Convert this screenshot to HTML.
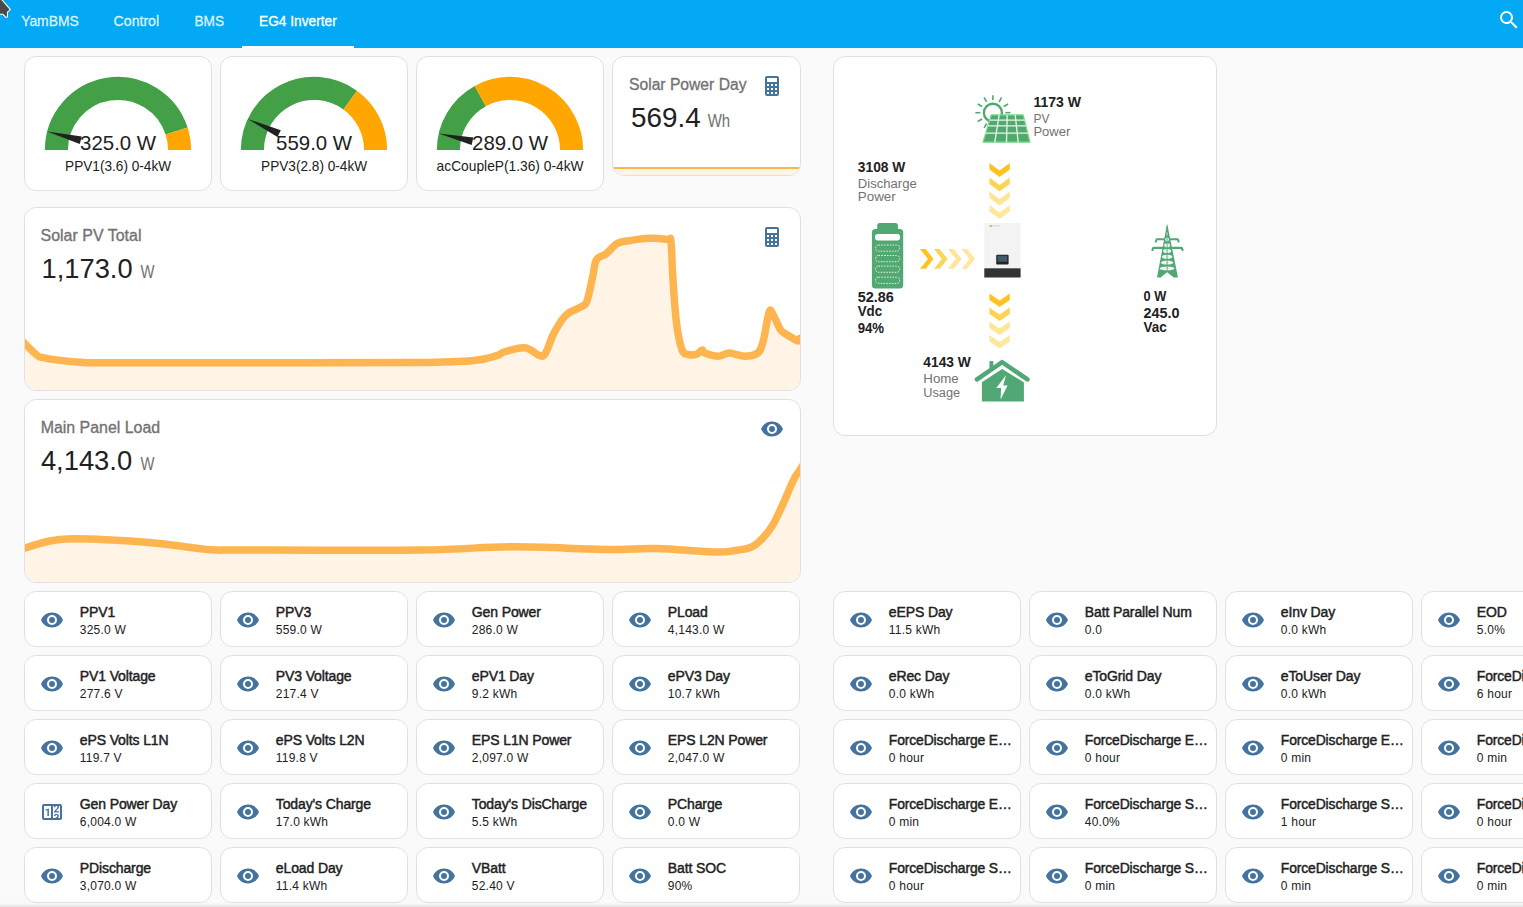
<!DOCTYPE html>
<html><head><meta charset="utf-8"><title>EG4 Inverter</title><style>
*{margin:0;padding:0;box-sizing:border-box}
html,body{width:1523px;height:907px;overflow:hidden;background:#fafafa;font-family:"Liberation Sans", sans-serif}
#hdr{position:absolute;left:0;top:0;width:1523px;height:48px;background:#03a9f4}
.card{position:absolute;background:#fff;border:1px solid #e0e0e0;border-radius:12px;overflow:hidden}
.ic{position:absolute}
#ov{position:absolute;left:0;top:0;width:1523px;height:907px;pointer-events:none}
#ov text{font-family:"Liberation Sans", sans-serif}
.tn{font-size:14px;fill:#212121;stroke:#212121;stroke-width:0.45px;letter-spacing:-0.12px}
.ts{font-size:12px;fill:#212121;letter-spacing:0.22px}
</style></head>
<body>
<div id="hdr"></div><div style="position:absolute;left:242px;top:46px;width:112px;height:2px;background:#fff"></div><svg class="ic" style="left:1497px;top:8px;width:24px;height:24px" viewBox="0 0 24 24"><path fill="#fff" d="M9.5,3A6.5,6.5 0 0,1 16,9.5C16,11.11 15.41,12.59 14.44,13.73L14.71,14H15.5L20.5,19L19,20.5L14,15.5V14.71L13.73,14.44C12.59,15.41 11.11,16 9.5,16A6.5,6.5 0 0,1 3,9.5A6.5,6.5 0 0,1 9.5,3M9.5,5C7,5 5,7 5,9.5C5,12 7,14 9.5,14C12,14 14,12 14,9.5C14,7 12,5 9.5,5Z"/></svg><div class="card" style="left:24px;top:56px;width:188px;height:135px;"><svg style="position:absolute;left:16.1px;top:15.8px;width:154px;height:77px;overflow:visible" viewBox="-50 -50 100 50"><path d="M -40.000 -0.000 A 40 40 0 0 1 38.042 -12.361" stroke="#43a047" stroke-width="15" fill="none"/><path d="M 38.042 -12.361 A 40 40 0 0 1 40.000 -0.000" stroke="#ffa600" stroke-width="15" fill="none"/><path d="M -25 -2.5 L -47.5 0 L -25 2.5 z" fill="#212121" transform="rotate(14.62)"/></svg></div><div class="card" style="left:220px;top:56px;width:188px;height:135px;"><svg style="position:absolute;left:16.1px;top:15.8px;width:154px;height:77px;overflow:visible" viewBox="-50 -50 100 50"><path d="M -40.000 -0.000 A 40 40 0 0 1 23.511 -32.361" stroke="#43a047" stroke-width="15" fill="none"/><path d="M 23.511 -32.361 A 40 40 0 0 1 40.000 -0.000" stroke="#ffa600" stroke-width="15" fill="none"/><path d="M -25 -2.5 L -47.5 0 L -25 2.5 z" fill="#212121" transform="rotate(25.16)"/></svg></div><div class="card" style="left:416px;top:56px;width:188px;height:135px;"><svg style="position:absolute;left:16.1px;top:15.8px;width:154px;height:77px;overflow:visible" viewBox="-50 -50 100 50"><path d="M -40.000 -0.000 A 40 40 0 0 1 -19.270 -35.052" stroke="#43a047" stroke-width="15" fill="none"/><path d="M -19.270 -35.052 A 40 40 0 0 1 40.000 -0.000" stroke="#ffa600" stroke-width="15" fill="none"/><path d="M -25 -2.5 L -47.5 0 L -25 2.5 z" fill="#212121" transform="rotate(13.00)"/></svg></div><div class="card" style="left:612px;top:56px;width:189px;height:120px;"><svg style="position:absolute;left:-1px;top:-1px;width:189px;height:120px" viewBox="0 0 189 120"><path d="M -4.0 112.0 C 31.5 112.0 157.5 112.0 193.0 112.0 L 193.0 125 L -4.0 125 Z" fill="#fff4e5"/><path d="M -4.0 112.0 C 31.5 112.0 157.5 112.0 193.0 112.0" fill="none" stroke="#ffb54f" stroke-width="2" stroke-linejoin="round" stroke-linecap="round"/></svg><svg class="ic" style="left:147px;top:17px;width:24px;height:24px" viewBox="0 0 24 24"><path fill="#44739e" d="M7,2H17A2,2 0 0,1 19,4V20A2,2 0 0,1 17,22H7A2,2 0 0,1 5,20V4A2,2 0 0,1 7,2M7,4V8H17V4H7M7,10V12H9V10H7M11,10V12H13V10H11M15,10V12H17V10H15M7,14V16H9V14H7M11,14V16H13V14H11M15,14V16H17V14H15M7,18V20H9V18H7M11,18V20H13V18H11M15,18V20H17V18H15Z"/></svg></div><div class="card" style="left:24px;top:207px;width:777px;height:184px;"><svg style="position:absolute;left:-1px;top:-1px;width:777px;height:184px" viewBox="0 0 777 184"><path d="M -4.0 131.0 C -3.1 132.0 -2.1 133.6 1.0 136.8 C 4.2 140.0 10.3 146.1 13.5 148.6 C 16.7 151.1 14.9 149.7 19.0 150.6 C 23.1 151.5 29.0 152.5 36.3 153.4 C 43.6 154.3 50.9 155.0 59.8 155.4 C 68.7 155.8 47.1 155.7 86.0 155.8 C 124.9 155.9 220.2 155.9 276.0 155.8 C 331.8 155.7 364.7 155.9 396.0 155.5 C 427.3 155.1 436.2 154.6 450.0 153.4 C 463.8 152.2 467.1 150.2 472.5 148.7 C 477.9 147.2 474.9 146.4 480.0 145.0 C 485.1 143.6 494.3 140.1 500.8 140.8 C 507.3 141.5 512.3 147.8 516.0 148.7 C 519.7 149.6 519.3 149.6 521.6 145.9 C 523.9 142.2 526.3 133.6 529.0 128.0 C 531.7 122.4 533.9 118.7 536.6 114.8 C 539.3 110.9 540.5 109.0 544.2 106.3 C 547.9 103.6 554.0 101.9 557.4 99.7 C 560.8 97.5 561.0 99.4 563.0 94.0 C 565.0 88.6 567.0 77.0 568.7 69.5 C 570.4 62.0 570.1 56.7 572.5 52.6 C 574.9 48.6 578.2 49.9 581.9 47.0 C 585.6 44.1 589.0 39.0 593.2 36.6 C 597.4 34.2 599.8 34.7 605.4 33.7 C 611.0 32.7 617.5 31.5 624.3 31.3 C 631.1 31.1 639.1 31.8 643.2 32.4 C 647.3 33.0 646.0 28.0 647.0 34.7 C 648.0 41.4 647.8 54.8 648.8 69.6 C 649.8 84.4 650.9 103.5 652.6 116.7 C 654.3 129.9 656.2 137.6 658.2 143.1 C 660.2 148.6 661.3 146.5 663.9 147.3 C 666.5 148.1 669.9 148.1 672.4 147.3 C 674.9 146.5 676.5 143.3 678.0 143.1 C 679.5 142.9 678.0 144.9 680.9 146.0 C 683.8 147.1 689.6 149.2 694.0 149.2 C 698.4 149.2 700.6 146.0 705.4 146.0 C 710.2 146.0 715.4 149.2 720.5 149.2 C 725.6 149.2 730.3 148.8 733.7 146.0 C 737.1 143.2 737.3 141.0 739.3 133.7 C 741.3 126.4 743.3 110.3 745.0 105.5 C 746.7 100.7 746.8 104.0 748.8 107.0 C 750.8 110.0 753.9 118.8 756.3 122.4 C 758.7 126.0 758.9 125.1 762.0 127.1 C 765.1 129.1 770.9 132.9 773.3 133.7 C 775.7 134.5 773.8 132.6 775.2 131.8 C 776.6 131.0 780.0 129.5 781.0 129.0 L 781.0 189 L -4.0 189 Z" fill="#fff4e5"/><path d="M -4.0 131.0 C -3.1 132.0 -2.1 133.6 1.0 136.8 C 4.2 140.0 10.3 146.1 13.5 148.6 C 16.7 151.1 14.9 149.7 19.0 150.6 C 23.1 151.5 29.0 152.5 36.3 153.4 C 43.6 154.3 50.9 155.0 59.8 155.4 C 68.7 155.8 47.1 155.7 86.0 155.8 C 124.9 155.9 220.2 155.9 276.0 155.8 C 331.8 155.7 364.7 155.9 396.0 155.5 C 427.3 155.1 436.2 154.6 450.0 153.4 C 463.8 152.2 467.1 150.2 472.5 148.7 C 477.9 147.2 474.9 146.4 480.0 145.0 C 485.1 143.6 494.3 140.1 500.8 140.8 C 507.3 141.5 512.3 147.8 516.0 148.7 C 519.7 149.6 519.3 149.6 521.6 145.9 C 523.9 142.2 526.3 133.6 529.0 128.0 C 531.7 122.4 533.9 118.7 536.6 114.8 C 539.3 110.9 540.5 109.0 544.2 106.3 C 547.9 103.6 554.0 101.9 557.4 99.7 C 560.8 97.5 561.0 99.4 563.0 94.0 C 565.0 88.6 567.0 77.0 568.7 69.5 C 570.4 62.0 570.1 56.7 572.5 52.6 C 574.9 48.6 578.2 49.9 581.9 47.0 C 585.6 44.1 589.0 39.0 593.2 36.6 C 597.4 34.2 599.8 34.7 605.4 33.7 C 611.0 32.7 617.5 31.5 624.3 31.3 C 631.1 31.1 639.1 31.8 643.2 32.4 C 647.3 33.0 646.0 28.0 647.0 34.7 C 648.0 41.4 647.8 54.8 648.8 69.6 C 649.8 84.4 650.9 103.5 652.6 116.7 C 654.3 129.9 656.2 137.6 658.2 143.1 C 660.2 148.6 661.3 146.5 663.9 147.3 C 666.5 148.1 669.9 148.1 672.4 147.3 C 674.9 146.5 676.5 143.3 678.0 143.1 C 679.5 142.9 678.0 144.9 680.9 146.0 C 683.8 147.1 689.6 149.2 694.0 149.2 C 698.4 149.2 700.6 146.0 705.4 146.0 C 710.2 146.0 715.4 149.2 720.5 149.2 C 725.6 149.2 730.3 148.8 733.7 146.0 C 737.1 143.2 737.3 141.0 739.3 133.7 C 741.3 126.4 743.3 110.3 745.0 105.5 C 746.7 100.7 746.8 104.0 748.8 107.0 C 750.8 110.0 753.9 118.8 756.3 122.4 C 758.7 126.0 758.9 125.1 762.0 127.1 C 765.1 129.1 770.9 132.9 773.3 133.7 C 775.7 134.5 773.8 132.6 775.2 131.8 C 776.6 131.0 780.0 129.5 781.0 129.0" fill="none" stroke="#ffb54f" stroke-width="7.5" stroke-linejoin="round" stroke-linecap="round"/></svg><svg class="ic" style="left:735px;top:17px;width:24px;height:24px" viewBox="0 0 24 24"><path fill="#44739e" d="M7,2H17A2,2 0 0,1 19,4V20A2,2 0 0,1 17,22H7A2,2 0 0,1 5,20V4A2,2 0 0,1 7,2M7,4V8H17V4H7M7,10V12H9V10H7M11,10V12H13V10H11M15,10V12H17V10H15M7,14V16H9V14H7M11,14V16H13V14H11M15,14V16H17V14H15M7,18V20H9V18H7M11,18V20H13V18H11M15,18V20H17V18H15Z"/></svg></div><div class="card" style="left:24px;top:399px;width:777px;height:184px;"><svg style="position:absolute;left:-1px;top:-1px;width:777px;height:184px" viewBox="0 0 777 184"><path d="M -6.0 151.0 C -4.8 150.6 -7.9 151.0 0.8 149.0 C 9.5 147.0 19.8 141.0 42.2 140.0 C 64.6 139.0 99.7 141.6 125.0 143.5 C 150.3 145.4 165.0 149.0 182.8 150.4 C 200.6 151.7 185.6 150.9 224.0 151.0 C 262.4 151.1 348.5 151.6 396.0 151.0 C 443.5 150.4 454.9 147.9 488.0 147.8 C 521.1 147.7 553.8 150.1 579.8 150.4 C 605.8 150.7 612.5 149.1 632.4 149.6 C 652.3 150.1 676.0 152.7 690.2 153.0 C 704.4 153.3 704.6 152.3 711.2 151.5 C 717.8 150.7 722.3 150.3 727.0 148.3 C 731.7 146.3 733.6 144.3 737.4 140.5 C 741.2 136.7 744.2 133.5 748.0 127.3 C 751.8 121.1 754.6 114.5 758.4 106.3 C 762.2 98.1 766.2 87.9 769.0 82.0 C 771.8 76.1 772.0 76.9 774.2 73.5 C 776.4 70.1 779.8 64.9 781.0 63.0 L 781.0 189 L -6.0 189 Z" fill="#fff4e5"/><path d="M -6.0 151.0 C -4.8 150.6 -7.9 151.0 0.8 149.0 C 9.5 147.0 19.8 141.0 42.2 140.0 C 64.6 139.0 99.7 141.6 125.0 143.5 C 150.3 145.4 165.0 149.0 182.8 150.4 C 200.6 151.7 185.6 150.9 224.0 151.0 C 262.4 151.1 348.5 151.6 396.0 151.0 C 443.5 150.4 454.9 147.9 488.0 147.8 C 521.1 147.7 553.8 150.1 579.8 150.4 C 605.8 150.7 612.5 149.1 632.4 149.6 C 652.3 150.1 676.0 152.7 690.2 153.0 C 704.4 153.3 704.6 152.3 711.2 151.5 C 717.8 150.7 722.3 150.3 727.0 148.3 C 731.7 146.3 733.6 144.3 737.4 140.5 C 741.2 136.7 744.2 133.5 748.0 127.3 C 751.8 121.1 754.6 114.5 758.4 106.3 C 762.2 98.1 766.2 87.9 769.0 82.0 C 771.8 76.1 772.0 76.9 774.2 73.5 C 776.4 70.1 779.8 64.9 781.0 63.0" fill="none" stroke="#ffb54f" stroke-width="7.5" stroke-linejoin="round" stroke-linecap="round"/></svg><svg class="ic" style="left:735px;top:17px;width:24px;height:24px" viewBox="0 0 24 24"><path fill="#44739e" d="M12,9A3,3 0 0,0 9,12A3,3 0 0,0 12,15A3,3 0 0,0 15,12A3,3 0 0,0 12,9M12,17A5,5 0 0,1 7,12A5,5 0 0,1 12,7A5,5 0 0,1 17,12A5,5 0 0,1 12,17M12,4.5C7,4.5 2.73,7.61 1,12C2.73,16.39 7,19.5 12,19.5C17,19.5 21.27,16.39 23,12C21.27,7.61 17,4.5 12,4.5Z"/></svg></div><div class="card" style="left:24px;top:591px;width:188px;height:56px;"><svg class="ic" style="left:15px;top:16px;width:24px;height:24px" viewBox="0 0 24 24"><path fill="#44739e" d="M12,9A3,3 0 0,0 9,12A3,3 0 0,0 12,15A3,3 0 0,0 15,12A3,3 0 0,0 12,9M12,17A5,5 0 0,1 7,12A5,5 0 0,1 12,7A5,5 0 0,1 17,12A5,5 0 0,1 12,17M12,4.5C7,4.5 2.73,7.61 1,12C2.73,16.39 7,19.5 12,19.5C17,19.5 21.27,16.39 23,12C21.27,7.61 17,4.5 12,4.5Z"/></svg></div><div class="card" style="left:220px;top:591px;width:188px;height:56px;"><svg class="ic" style="left:15px;top:16px;width:24px;height:24px" viewBox="0 0 24 24"><path fill="#44739e" d="M12,9A3,3 0 0,0 9,12A3,3 0 0,0 12,15A3,3 0 0,0 15,12A3,3 0 0,0 12,9M12,17A5,5 0 0,1 7,12A5,5 0 0,1 12,7A5,5 0 0,1 17,12A5,5 0 0,1 12,17M12,4.5C7,4.5 2.73,7.61 1,12C2.73,16.39 7,19.5 12,19.5C17,19.5 21.27,16.39 23,12C21.27,7.61 17,4.5 12,4.5Z"/></svg></div><div class="card" style="left:416px;top:591px;width:188px;height:56px;"><svg class="ic" style="left:15px;top:16px;width:24px;height:24px" viewBox="0 0 24 24"><path fill="#44739e" d="M12,9A3,3 0 0,0 9,12A3,3 0 0,0 12,15A3,3 0 0,0 15,12A3,3 0 0,0 12,9M12,17A5,5 0 0,1 7,12A5,5 0 0,1 12,7A5,5 0 0,1 17,12A5,5 0 0,1 12,17M12,4.5C7,4.5 2.73,7.61 1,12C2.73,16.39 7,19.5 12,19.5C17,19.5 21.27,16.39 23,12C21.27,7.61 17,4.5 12,4.5Z"/></svg></div><div class="card" style="left:612px;top:591px;width:188px;height:56px;"><svg class="ic" style="left:15px;top:16px;width:24px;height:24px" viewBox="0 0 24 24"><path fill="#44739e" d="M12,9A3,3 0 0,0 9,12A3,3 0 0,0 12,15A3,3 0 0,0 15,12A3,3 0 0,0 12,9M12,17A5,5 0 0,1 7,12A5,5 0 0,1 12,7A5,5 0 0,1 17,12A5,5 0 0,1 12,17M12,4.5C7,4.5 2.73,7.61 1,12C2.73,16.39 7,19.5 12,19.5C17,19.5 21.27,16.39 23,12C21.27,7.61 17,4.5 12,4.5Z"/></svg></div><div class="card" style="left:24px;top:655px;width:188px;height:56px;"><svg class="ic" style="left:15px;top:16px;width:24px;height:24px" viewBox="0 0 24 24"><path fill="#44739e" d="M12,9A3,3 0 0,0 9,12A3,3 0 0,0 12,15A3,3 0 0,0 15,12A3,3 0 0,0 12,9M12,17A5,5 0 0,1 7,12A5,5 0 0,1 12,7A5,5 0 0,1 17,12A5,5 0 0,1 12,17M12,4.5C7,4.5 2.73,7.61 1,12C2.73,16.39 7,19.5 12,19.5C17,19.5 21.27,16.39 23,12C21.27,7.61 17,4.5 12,4.5Z"/></svg></div><div class="card" style="left:220px;top:655px;width:188px;height:56px;"><svg class="ic" style="left:15px;top:16px;width:24px;height:24px" viewBox="0 0 24 24"><path fill="#44739e" d="M12,9A3,3 0 0,0 9,12A3,3 0 0,0 12,15A3,3 0 0,0 15,12A3,3 0 0,0 12,9M12,17A5,5 0 0,1 7,12A5,5 0 0,1 12,7A5,5 0 0,1 17,12A5,5 0 0,1 12,17M12,4.5C7,4.5 2.73,7.61 1,12C2.73,16.39 7,19.5 12,19.5C17,19.5 21.27,16.39 23,12C21.27,7.61 17,4.5 12,4.5Z"/></svg></div><div class="card" style="left:416px;top:655px;width:188px;height:56px;"><svg class="ic" style="left:15px;top:16px;width:24px;height:24px" viewBox="0 0 24 24"><path fill="#44739e" d="M12,9A3,3 0 0,0 9,12A3,3 0 0,0 12,15A3,3 0 0,0 15,12A3,3 0 0,0 12,9M12,17A5,5 0 0,1 7,12A5,5 0 0,1 12,7A5,5 0 0,1 17,12A5,5 0 0,1 12,17M12,4.5C7,4.5 2.73,7.61 1,12C2.73,16.39 7,19.5 12,19.5C17,19.5 21.27,16.39 23,12C21.27,7.61 17,4.5 12,4.5Z"/></svg></div><div class="card" style="left:612px;top:655px;width:188px;height:56px;"><svg class="ic" style="left:15px;top:16px;width:24px;height:24px" viewBox="0 0 24 24"><path fill="#44739e" d="M12,9A3,3 0 0,0 9,12A3,3 0 0,0 12,15A3,3 0 0,0 15,12A3,3 0 0,0 12,9M12,17A5,5 0 0,1 7,12A5,5 0 0,1 12,7A5,5 0 0,1 17,12A5,5 0 0,1 12,17M12,4.5C7,4.5 2.73,7.61 1,12C2.73,16.39 7,19.5 12,19.5C17,19.5 21.27,16.39 23,12C21.27,7.61 17,4.5 12,4.5Z"/></svg></div><div class="card" style="left:24px;top:719px;width:188px;height:56px;"><svg class="ic" style="left:15px;top:16px;width:24px;height:24px" viewBox="0 0 24 24"><path fill="#44739e" d="M12,9A3,3 0 0,0 9,12A3,3 0 0,0 12,15A3,3 0 0,0 15,12A3,3 0 0,0 12,9M12,17A5,5 0 0,1 7,12A5,5 0 0,1 12,7A5,5 0 0,1 17,12A5,5 0 0,1 12,17M12,4.5C7,4.5 2.73,7.61 1,12C2.73,16.39 7,19.5 12,19.5C17,19.5 21.27,16.39 23,12C21.27,7.61 17,4.5 12,4.5Z"/></svg></div><div class="card" style="left:220px;top:719px;width:188px;height:56px;"><svg class="ic" style="left:15px;top:16px;width:24px;height:24px" viewBox="0 0 24 24"><path fill="#44739e" d="M12,9A3,3 0 0,0 9,12A3,3 0 0,0 12,15A3,3 0 0,0 15,12A3,3 0 0,0 12,9M12,17A5,5 0 0,1 7,12A5,5 0 0,1 12,7A5,5 0 0,1 17,12A5,5 0 0,1 12,17M12,4.5C7,4.5 2.73,7.61 1,12C2.73,16.39 7,19.5 12,19.5C17,19.5 21.27,16.39 23,12C21.27,7.61 17,4.5 12,4.5Z"/></svg></div><div class="card" style="left:416px;top:719px;width:188px;height:56px;"><svg class="ic" style="left:15px;top:16px;width:24px;height:24px" viewBox="0 0 24 24"><path fill="#44739e" d="M12,9A3,3 0 0,0 9,12A3,3 0 0,0 12,15A3,3 0 0,0 15,12A3,3 0 0,0 12,9M12,17A5,5 0 0,1 7,12A5,5 0 0,1 12,7A5,5 0 0,1 17,12A5,5 0 0,1 12,17M12,4.5C7,4.5 2.73,7.61 1,12C2.73,16.39 7,19.5 12,19.5C17,19.5 21.27,16.39 23,12C21.27,7.61 17,4.5 12,4.5Z"/></svg></div><div class="card" style="left:612px;top:719px;width:188px;height:56px;"><svg class="ic" style="left:15px;top:16px;width:24px;height:24px" viewBox="0 0 24 24"><path fill="#44739e" d="M12,9A3,3 0 0,0 9,12A3,3 0 0,0 12,15A3,3 0 0,0 15,12A3,3 0 0,0 12,9M12,17A5,5 0 0,1 7,12A5,5 0 0,1 12,7A5,5 0 0,1 17,12A5,5 0 0,1 12,17M12,4.5C7,4.5 2.73,7.61 1,12C2.73,16.39 7,19.5 12,19.5C17,19.5 21.27,16.39 23,12C21.27,7.61 17,4.5 12,4.5Z"/></svg></div><div class="card" style="left:24px;top:783px;width:188px;height:56px;"><svg class="ic" style="left:15px;top:16px;width:24px;height:24px" viewBox="0 0 24 24"><path fill="#44739e" d="M4,4H20A2,2 0 0,1 22,6V18A2,2 0 0,1 20,20H4A2,2 0 0,1 2,18V6A2,2 0 0,1 4,4M4,6V18H11V6H4M20,18V6H18.76C19,6.54 18.95,7.07 18.95,7.13C18.88,7.8 18.41,8.5 18.24,8.75L15.91,11.3L19.23,11.28L19.24,12.5L14.04,12.47L14,11.47C14,11.47 17.05,8.24 17.2,7.95C17.34,7.67 17.91,6 16.5,6C15.27,6.05 15.41,7.3 15.41,7.3L13.87,7.31C13.87,7.31 13.88,6.65 14.25,6H13V18H15.58L15.57,17.14L16.54,17.13C16.54,17.13 17.45,16.97 17.46,16.08C17.5,15.08 16.65,15.08 16.5,15.08C16.37,15.08 15.43,15.13 15.43,15.95H13.91C13.91,15.95 13.95,13.89 16.5,13.89C19.1,13.89 18.96,15.91 18.96,15.91C18.96,15.91 19,17.16 17.85,17.63L18.37,18H20M8.92,16H7.42V10.2L5.62,10.76V9.53L8.76,8.41H8.92V16Z"/></svg></div><div class="card" style="left:220px;top:783px;width:188px;height:56px;"><svg class="ic" style="left:15px;top:16px;width:24px;height:24px" viewBox="0 0 24 24"><path fill="#44739e" d="M12,9A3,3 0 0,0 9,12A3,3 0 0,0 12,15A3,3 0 0,0 15,12A3,3 0 0,0 12,9M12,17A5,5 0 0,1 7,12A5,5 0 0,1 12,7A5,5 0 0,1 17,12A5,5 0 0,1 12,17M12,4.5C7,4.5 2.73,7.61 1,12C2.73,16.39 7,19.5 12,19.5C17,19.5 21.27,16.39 23,12C21.27,7.61 17,4.5 12,4.5Z"/></svg></div><div class="card" style="left:416px;top:783px;width:188px;height:56px;"><svg class="ic" style="left:15px;top:16px;width:24px;height:24px" viewBox="0 0 24 24"><path fill="#44739e" d="M12,9A3,3 0 0,0 9,12A3,3 0 0,0 12,15A3,3 0 0,0 15,12A3,3 0 0,0 12,9M12,17A5,5 0 0,1 7,12A5,5 0 0,1 12,7A5,5 0 0,1 17,12A5,5 0 0,1 12,17M12,4.5C7,4.5 2.73,7.61 1,12C2.73,16.39 7,19.5 12,19.5C17,19.5 21.27,16.39 23,12C21.27,7.61 17,4.5 12,4.5Z"/></svg></div><div class="card" style="left:612px;top:783px;width:188px;height:56px;"><svg class="ic" style="left:15px;top:16px;width:24px;height:24px" viewBox="0 0 24 24"><path fill="#44739e" d="M12,9A3,3 0 0,0 9,12A3,3 0 0,0 12,15A3,3 0 0,0 15,12A3,3 0 0,0 12,9M12,17A5,5 0 0,1 7,12A5,5 0 0,1 12,7A5,5 0 0,1 17,12A5,5 0 0,1 12,17M12,4.5C7,4.5 2.73,7.61 1,12C2.73,16.39 7,19.5 12,19.5C17,19.5 21.27,16.39 23,12C21.27,7.61 17,4.5 12,4.5Z"/></svg></div><div class="card" style="left:24px;top:847px;width:188px;height:56px;"><svg class="ic" style="left:15px;top:16px;width:24px;height:24px" viewBox="0 0 24 24"><path fill="#44739e" d="M12,9A3,3 0 0,0 9,12A3,3 0 0,0 12,15A3,3 0 0,0 15,12A3,3 0 0,0 12,9M12,17A5,5 0 0,1 7,12A5,5 0 0,1 12,7A5,5 0 0,1 17,12A5,5 0 0,1 12,17M12,4.5C7,4.5 2.73,7.61 1,12C2.73,16.39 7,19.5 12,19.5C17,19.5 21.27,16.39 23,12C21.27,7.61 17,4.5 12,4.5Z"/></svg></div><div class="card" style="left:220px;top:847px;width:188px;height:56px;"><svg class="ic" style="left:15px;top:16px;width:24px;height:24px" viewBox="0 0 24 24"><path fill="#44739e" d="M12,9A3,3 0 0,0 9,12A3,3 0 0,0 12,15A3,3 0 0,0 15,12A3,3 0 0,0 12,9M12,17A5,5 0 0,1 7,12A5,5 0 0,1 12,7A5,5 0 0,1 17,12A5,5 0 0,1 12,17M12,4.5C7,4.5 2.73,7.61 1,12C2.73,16.39 7,19.5 12,19.5C17,19.5 21.27,16.39 23,12C21.27,7.61 17,4.5 12,4.5Z"/></svg></div><div class="card" style="left:416px;top:847px;width:188px;height:56px;"><svg class="ic" style="left:15px;top:16px;width:24px;height:24px" viewBox="0 0 24 24"><path fill="#44739e" d="M12,9A3,3 0 0,0 9,12A3,3 0 0,0 12,15A3,3 0 0,0 15,12A3,3 0 0,0 12,9M12,17A5,5 0 0,1 7,12A5,5 0 0,1 12,7A5,5 0 0,1 17,12A5,5 0 0,1 12,17M12,4.5C7,4.5 2.73,7.61 1,12C2.73,16.39 7,19.5 12,19.5C17,19.5 21.27,16.39 23,12C21.27,7.61 17,4.5 12,4.5Z"/></svg></div><div class="card" style="left:612px;top:847px;width:188px;height:56px;"><svg class="ic" style="left:15px;top:16px;width:24px;height:24px" viewBox="0 0 24 24"><path fill="#44739e" d="M12,9A3,3 0 0,0 9,12A3,3 0 0,0 12,15A3,3 0 0,0 15,12A3,3 0 0,0 12,9M12,17A5,5 0 0,1 7,12A5,5 0 0,1 12,7A5,5 0 0,1 17,12A5,5 0 0,1 12,17M12,4.5C7,4.5 2.73,7.61 1,12C2.73,16.39 7,19.5 12,19.5C17,19.5 21.27,16.39 23,12C21.27,7.61 17,4.5 12,4.5Z"/></svg></div><div class="card" style="left:833px;top:591px;width:188px;height:56px;"><svg class="ic" style="left:15px;top:16px;width:24px;height:24px" viewBox="0 0 24 24"><path fill="#44739e" d="M12,9A3,3 0 0,0 9,12A3,3 0 0,0 12,15A3,3 0 0,0 15,12A3,3 0 0,0 12,9M12,17A5,5 0 0,1 7,12A5,5 0 0,1 12,7A5,5 0 0,1 17,12A5,5 0 0,1 12,17M12,4.5C7,4.5 2.73,7.61 1,12C2.73,16.39 7,19.5 12,19.5C17,19.5 21.27,16.39 23,12C21.27,7.61 17,4.5 12,4.5Z"/></svg></div><div class="card" style="left:1029px;top:591px;width:188px;height:56px;"><svg class="ic" style="left:15px;top:16px;width:24px;height:24px" viewBox="0 0 24 24"><path fill="#44739e" d="M12,9A3,3 0 0,0 9,12A3,3 0 0,0 12,15A3,3 0 0,0 15,12A3,3 0 0,0 12,9M12,17A5,5 0 0,1 7,12A5,5 0 0,1 12,7A5,5 0 0,1 17,12A5,5 0 0,1 12,17M12,4.5C7,4.5 2.73,7.61 1,12C2.73,16.39 7,19.5 12,19.5C17,19.5 21.27,16.39 23,12C21.27,7.61 17,4.5 12,4.5Z"/></svg></div><div class="card" style="left:1225px;top:591px;width:188px;height:56px;"><svg class="ic" style="left:15px;top:16px;width:24px;height:24px" viewBox="0 0 24 24"><path fill="#44739e" d="M12,9A3,3 0 0,0 9,12A3,3 0 0,0 12,15A3,3 0 0,0 15,12A3,3 0 0,0 12,9M12,17A5,5 0 0,1 7,12A5,5 0 0,1 12,7A5,5 0 0,1 17,12A5,5 0 0,1 12,17M12,4.5C7,4.5 2.73,7.61 1,12C2.73,16.39 7,19.5 12,19.5C17,19.5 21.27,16.39 23,12C21.27,7.61 17,4.5 12,4.5Z"/></svg></div><div class="card" style="left:1421px;top:591px;width:188px;height:56px;"><svg class="ic" style="left:15px;top:16px;width:24px;height:24px" viewBox="0 0 24 24"><path fill="#44739e" d="M12,9A3,3 0 0,0 9,12A3,3 0 0,0 12,15A3,3 0 0,0 15,12A3,3 0 0,0 12,9M12,17A5,5 0 0,1 7,12A5,5 0 0,1 12,7A5,5 0 0,1 17,12A5,5 0 0,1 12,17M12,4.5C7,4.5 2.73,7.61 1,12C2.73,16.39 7,19.5 12,19.5C17,19.5 21.27,16.39 23,12C21.27,7.61 17,4.5 12,4.5Z"/></svg></div><div class="card" style="left:833px;top:655px;width:188px;height:56px;"><svg class="ic" style="left:15px;top:16px;width:24px;height:24px" viewBox="0 0 24 24"><path fill="#44739e" d="M12,9A3,3 0 0,0 9,12A3,3 0 0,0 12,15A3,3 0 0,0 15,12A3,3 0 0,0 12,9M12,17A5,5 0 0,1 7,12A5,5 0 0,1 12,7A5,5 0 0,1 17,12A5,5 0 0,1 12,17M12,4.5C7,4.5 2.73,7.61 1,12C2.73,16.39 7,19.5 12,19.5C17,19.5 21.27,16.39 23,12C21.27,7.61 17,4.5 12,4.5Z"/></svg></div><div class="card" style="left:1029px;top:655px;width:188px;height:56px;"><svg class="ic" style="left:15px;top:16px;width:24px;height:24px" viewBox="0 0 24 24"><path fill="#44739e" d="M12,9A3,3 0 0,0 9,12A3,3 0 0,0 12,15A3,3 0 0,0 15,12A3,3 0 0,0 12,9M12,17A5,5 0 0,1 7,12A5,5 0 0,1 12,7A5,5 0 0,1 17,12A5,5 0 0,1 12,17M12,4.5C7,4.5 2.73,7.61 1,12C2.73,16.39 7,19.5 12,19.5C17,19.5 21.27,16.39 23,12C21.27,7.61 17,4.5 12,4.5Z"/></svg></div><div class="card" style="left:1225px;top:655px;width:188px;height:56px;"><svg class="ic" style="left:15px;top:16px;width:24px;height:24px" viewBox="0 0 24 24"><path fill="#44739e" d="M12,9A3,3 0 0,0 9,12A3,3 0 0,0 12,15A3,3 0 0,0 15,12A3,3 0 0,0 12,9M12,17A5,5 0 0,1 7,12A5,5 0 0,1 12,7A5,5 0 0,1 17,12A5,5 0 0,1 12,17M12,4.5C7,4.5 2.73,7.61 1,12C2.73,16.39 7,19.5 12,19.5C17,19.5 21.27,16.39 23,12C21.27,7.61 17,4.5 12,4.5Z"/></svg></div><div class="card" style="left:1421px;top:655px;width:188px;height:56px;"><svg class="ic" style="left:15px;top:16px;width:24px;height:24px" viewBox="0 0 24 24"><path fill="#44739e" d="M12,9A3,3 0 0,0 9,12A3,3 0 0,0 12,15A3,3 0 0,0 15,12A3,3 0 0,0 12,9M12,17A5,5 0 0,1 7,12A5,5 0 0,1 12,7A5,5 0 0,1 17,12A5,5 0 0,1 12,17M12,4.5C7,4.5 2.73,7.61 1,12C2.73,16.39 7,19.5 12,19.5C17,19.5 21.27,16.39 23,12C21.27,7.61 17,4.5 12,4.5Z"/></svg></div><div class="card" style="left:833px;top:719px;width:188px;height:56px;"><svg class="ic" style="left:15px;top:16px;width:24px;height:24px" viewBox="0 0 24 24"><path fill="#44739e" d="M12,9A3,3 0 0,0 9,12A3,3 0 0,0 12,15A3,3 0 0,0 15,12A3,3 0 0,0 12,9M12,17A5,5 0 0,1 7,12A5,5 0 0,1 12,7A5,5 0 0,1 17,12A5,5 0 0,1 12,17M12,4.5C7,4.5 2.73,7.61 1,12C2.73,16.39 7,19.5 12,19.5C17,19.5 21.27,16.39 23,12C21.27,7.61 17,4.5 12,4.5Z"/></svg></div><div class="card" style="left:1029px;top:719px;width:188px;height:56px;"><svg class="ic" style="left:15px;top:16px;width:24px;height:24px" viewBox="0 0 24 24"><path fill="#44739e" d="M12,9A3,3 0 0,0 9,12A3,3 0 0,0 12,15A3,3 0 0,0 15,12A3,3 0 0,0 12,9M12,17A5,5 0 0,1 7,12A5,5 0 0,1 12,7A5,5 0 0,1 17,12A5,5 0 0,1 12,17M12,4.5C7,4.5 2.73,7.61 1,12C2.73,16.39 7,19.5 12,19.5C17,19.5 21.27,16.39 23,12C21.27,7.61 17,4.5 12,4.5Z"/></svg></div><div class="card" style="left:1225px;top:719px;width:188px;height:56px;"><svg class="ic" style="left:15px;top:16px;width:24px;height:24px" viewBox="0 0 24 24"><path fill="#44739e" d="M12,9A3,3 0 0,0 9,12A3,3 0 0,0 12,15A3,3 0 0,0 15,12A3,3 0 0,0 12,9M12,17A5,5 0 0,1 7,12A5,5 0 0,1 12,7A5,5 0 0,1 17,12A5,5 0 0,1 12,17M12,4.5C7,4.5 2.73,7.61 1,12C2.73,16.39 7,19.5 12,19.5C17,19.5 21.27,16.39 23,12C21.27,7.61 17,4.5 12,4.5Z"/></svg></div><div class="card" style="left:1421px;top:719px;width:188px;height:56px;"><svg class="ic" style="left:15px;top:16px;width:24px;height:24px" viewBox="0 0 24 24"><path fill="#44739e" d="M12,9A3,3 0 0,0 9,12A3,3 0 0,0 12,15A3,3 0 0,0 15,12A3,3 0 0,0 12,9M12,17A5,5 0 0,1 7,12A5,5 0 0,1 12,7A5,5 0 0,1 17,12A5,5 0 0,1 12,17M12,4.5C7,4.5 2.73,7.61 1,12C2.73,16.39 7,19.5 12,19.5C17,19.5 21.27,16.39 23,12C21.27,7.61 17,4.5 12,4.5Z"/></svg></div><div class="card" style="left:833px;top:783px;width:188px;height:56px;"><svg class="ic" style="left:15px;top:16px;width:24px;height:24px" viewBox="0 0 24 24"><path fill="#44739e" d="M12,9A3,3 0 0,0 9,12A3,3 0 0,0 12,15A3,3 0 0,0 15,12A3,3 0 0,0 12,9M12,17A5,5 0 0,1 7,12A5,5 0 0,1 12,7A5,5 0 0,1 17,12A5,5 0 0,1 12,17M12,4.5C7,4.5 2.73,7.61 1,12C2.73,16.39 7,19.5 12,19.5C17,19.5 21.27,16.39 23,12C21.27,7.61 17,4.5 12,4.5Z"/></svg></div><div class="card" style="left:1029px;top:783px;width:188px;height:56px;"><svg class="ic" style="left:15px;top:16px;width:24px;height:24px" viewBox="0 0 24 24"><path fill="#44739e" d="M12,9A3,3 0 0,0 9,12A3,3 0 0,0 12,15A3,3 0 0,0 15,12A3,3 0 0,0 12,9M12,17A5,5 0 0,1 7,12A5,5 0 0,1 12,7A5,5 0 0,1 17,12A5,5 0 0,1 12,17M12,4.5C7,4.5 2.73,7.61 1,12C2.73,16.39 7,19.5 12,19.5C17,19.5 21.27,16.39 23,12C21.27,7.61 17,4.5 12,4.5Z"/></svg></div><div class="card" style="left:1225px;top:783px;width:188px;height:56px;"><svg class="ic" style="left:15px;top:16px;width:24px;height:24px" viewBox="0 0 24 24"><path fill="#44739e" d="M12,9A3,3 0 0,0 9,12A3,3 0 0,0 12,15A3,3 0 0,0 15,12A3,3 0 0,0 12,9M12,17A5,5 0 0,1 7,12A5,5 0 0,1 12,7A5,5 0 0,1 17,12A5,5 0 0,1 12,17M12,4.5C7,4.5 2.73,7.61 1,12C2.73,16.39 7,19.5 12,19.5C17,19.5 21.27,16.39 23,12C21.27,7.61 17,4.5 12,4.5Z"/></svg></div><div class="card" style="left:1421px;top:783px;width:188px;height:56px;"><svg class="ic" style="left:15px;top:16px;width:24px;height:24px" viewBox="0 0 24 24"><path fill="#44739e" d="M12,9A3,3 0 0,0 9,12A3,3 0 0,0 12,15A3,3 0 0,0 15,12A3,3 0 0,0 12,9M12,17A5,5 0 0,1 7,12A5,5 0 0,1 12,7A5,5 0 0,1 17,12A5,5 0 0,1 12,17M12,4.5C7,4.5 2.73,7.61 1,12C2.73,16.39 7,19.5 12,19.5C17,19.5 21.27,16.39 23,12C21.27,7.61 17,4.5 12,4.5Z"/></svg></div><div class="card" style="left:833px;top:847px;width:188px;height:56px;"><svg class="ic" style="left:15px;top:16px;width:24px;height:24px" viewBox="0 0 24 24"><path fill="#44739e" d="M12,9A3,3 0 0,0 9,12A3,3 0 0,0 12,15A3,3 0 0,0 15,12A3,3 0 0,0 12,9M12,17A5,5 0 0,1 7,12A5,5 0 0,1 12,7A5,5 0 0,1 17,12A5,5 0 0,1 12,17M12,4.5C7,4.5 2.73,7.61 1,12C2.73,16.39 7,19.5 12,19.5C17,19.5 21.27,16.39 23,12C21.27,7.61 17,4.5 12,4.5Z"/></svg></div><div class="card" style="left:1029px;top:847px;width:188px;height:56px;"><svg class="ic" style="left:15px;top:16px;width:24px;height:24px" viewBox="0 0 24 24"><path fill="#44739e" d="M12,9A3,3 0 0,0 9,12A3,3 0 0,0 12,15A3,3 0 0,0 15,12A3,3 0 0,0 12,9M12,17A5,5 0 0,1 7,12A5,5 0 0,1 12,7A5,5 0 0,1 17,12A5,5 0 0,1 12,17M12,4.5C7,4.5 2.73,7.61 1,12C2.73,16.39 7,19.5 12,19.5C17,19.5 21.27,16.39 23,12C21.27,7.61 17,4.5 12,4.5Z"/></svg></div><div class="card" style="left:1225px;top:847px;width:188px;height:56px;"><svg class="ic" style="left:15px;top:16px;width:24px;height:24px" viewBox="0 0 24 24"><path fill="#44739e" d="M12,9A3,3 0 0,0 9,12A3,3 0 0,0 12,15A3,3 0 0,0 15,12A3,3 0 0,0 12,9M12,17A5,5 0 0,1 7,12A5,5 0 0,1 12,7A5,5 0 0,1 17,12A5,5 0 0,1 12,17M12,4.5C7,4.5 2.73,7.61 1,12C2.73,16.39 7,19.5 12,19.5C17,19.5 21.27,16.39 23,12C21.27,7.61 17,4.5 12,4.5Z"/></svg></div><div class="card" style="left:1421px;top:847px;width:188px;height:56px;"><svg class="ic" style="left:15px;top:16px;width:24px;height:24px" viewBox="0 0 24 24"><path fill="#44739e" d="M12,9A3,3 0 0,0 9,12A3,3 0 0,0 12,15A3,3 0 0,0 15,12A3,3 0 0,0 12,9M12,17A5,5 0 0,1 7,12A5,5 0 0,1 12,7A5,5 0 0,1 17,12A5,5 0 0,1 12,17M12,4.5C7,4.5 2.73,7.61 1,12C2.73,16.39 7,19.5 12,19.5C17,19.5 21.27,16.39 23,12C21.27,7.61 17,4.5 12,4.5Z"/></svg></div><div class="card" style="left:833px;top:56px;width:384px;height:380px;"></div>
<svg id="ov" viewBox="0 0 1523 907"><circle cx="992.9" cy="112.7" r="9" fill="none" stroke="#52a86f" stroke-width="2.4"/><line x1="992.9" y1="100.2" x2="992.9" y2="95.2" stroke="#52a86f" stroke-width="1.6"/><line x1="999.1" y1="101.9" x2="1001.6" y2="97.5" stroke="#52a86f" stroke-width="1.6"/><line x1="1003.7" y1="106.5" x2="1008.1" y2="104.0" stroke="#52a86f" stroke-width="1.6"/><line x1="1005.4" y1="112.7" x2="1010.4" y2="112.7" stroke="#52a86f" stroke-width="1.6"/><line x1="986.6" y1="101.9" x2="984.1" y2="97.5" stroke="#52a86f" stroke-width="1.6"/><line x1="982.1" y1="106.5" x2="977.7" y2="104.0" stroke="#52a86f" stroke-width="1.6"/><line x1="980.4" y1="112.7" x2="975.4" y2="112.7" stroke="#52a86f" stroke-width="1.6"/><line x1="982.1" y1="119.0" x2="977.7" y2="121.5" stroke="#52a86f" stroke-width="1.6"/><line x1="986.6" y1="123.5" x2="984.1" y2="127.9" stroke="#52a86f" stroke-width="1.6"/><polygon points="991.2,114.9 1023.2,114.9 1030,142.2 983,142.2" fill="#52a86f" stroke="#7ed98a" stroke-width="1.2" stroke-linejoin="round"/><line x1="999.2" y1="114.9" x2="994.8" y2="142.2" stroke="#e4fae4" stroke-width="1.3"/><line x1="1007.2" y1="114.9" x2="1006.5" y2="142.2" stroke="#e4fae4" stroke-width="1.3"/><line x1="1015.2" y1="114.9" x2="1018.2" y2="142.2" stroke="#e4fae4" stroke-width="1.3"/><line x1="989.6" y1="120.2" x2="1024.5" y2="120.2" stroke="#e4fae4" stroke-width="1.3"/><line x1="987.9" y1="125.9" x2="1025.9" y2="125.9" stroke="#e4fae4" stroke-width="1.3"/><line x1="985.7" y1="133.2" x2="1027.8" y2="133.2" stroke="#e4fae4" stroke-width="1.3"/><polygon points="989.4,163.1 999.5999999999999,170.6 1009.8,163.1 1009.8,169.6 999.5999999999999,177.1 989.4,169.6" fill="#ffc21f"/><polygon points="989.4,177.5 999.5999999999999,185.0 1009.8,177.5 1009.8,184.0 999.5999999999999,191.5 989.4,184.0" fill="#ffd454"/><polygon points="989.4,191.5 999.5999999999999,199.0 1009.8,191.5 1009.8,198.0 999.5999999999999,205.5 989.4,198.0" fill="#ffe595"/><polygon points="989.4,205 999.5999999999999,212.5 1009.8,205 1009.8,211.5 999.5999999999999,219 989.4,211.5" fill="#ffe7a0"/><polygon points="989.4,293.5 999.5999999999999,300.6 1009.8,293.5 1009.8,300.0 999.5999999999999,307.1 989.4,300.0" fill="#ffc21f"/><polygon points="989.4,307.5 999.5999999999999,314.6 1009.8,307.5 1009.8,314.0 999.5999999999999,321.1 989.4,314.0" fill="#ffd454"/><polygon points="989.4,321.5 999.5999999999999,328.6 1009.8,321.5 1009.8,328.0 999.5999999999999,335.1 989.4,328.0" fill="#ffe595"/><polygon points="989.4,335 999.5999999999999,342.1 1009.8,335 1009.8,341.5 999.5999999999999,348.6 989.4,341.5" fill="#ffe7a0"/><polygon points="920,249 925.7,249 933.6,258.9 925.7,268.8 920,268.8 927.9,258.9" fill="#ffc21f"/><polygon points="934,249 939.7,249 947.6,258.9 939.7,268.8 934,268.8 941.9,258.9" fill="#ffd454"/><polygon points="948,249 953.7,249 961.6,258.9 953.7,268.8 948,268.8 955.9,258.9" fill="#ffe595"/><polygon points="961.5,249 967.2,249 975.1,258.9 967.2,268.8 961.5,268.8 969.4,258.9" fill="#ffe7a0"/><rect x="984.3" y="223.1" width="36.3" height="45.2" fill="#f3f3f3"/><rect x="984.3" y="268.3" width="36.3" height="9.2" fill="#333"/><rect x="996.2" y="254.7" width="12.4" height="9.7" rx="1" fill="#2b2220"/><rect x="997.5" y="255.8" width="9.8" height="6" fill="#3e5968"/><rect x="989.6" y="225.3" width="2.4" height="1.4" fill="#6c3"/><rect x="992.5" y="225.5" width="8" height="0.8" fill="#ccc"/><rect x="877.2" y="222.9" width="20.7" height="8" rx="2.5" fill="#52a874"/><rect x="871.9" y="229.1" width="31.3" height="59.5" rx="3.5" fill="#52a874"/><rect x="875" y="234" width="25.1" height="6.6" rx="3" fill="#fff"/><rect x="875.5" y="245.0" width="24.2" height="6.2" rx="3" fill="none" stroke="#f4f7c8" stroke-width="0.9" stroke-dasharray="1.6 1.2"/><rect x="875.5" y="255.5" width="24.2" height="6.2" rx="3" fill="none" stroke="#f4f7c8" stroke-width="0.9" stroke-dasharray="1.6 1.2"/><rect x="875.5" y="266.1" width="24.2" height="6.2" rx="3" fill="none" stroke="#f4f7c8" stroke-width="0.9" stroke-dasharray="1.6 1.2"/><rect x="875.5" y="277.2" width="24.2" height="6.2" rx="3" fill="none" stroke="#f4f7c8" stroke-width="0.9" stroke-dasharray="1.6 1.2"/><polygon points="1167.1,223.5 1157,277.5 1160.6,277.5 1167.1,272.2 1173.9,277.5 1178,277.5" fill="#52a874"/><path d="M1155.8,241.6 L1156.6,239.3 L1177.8,239.3 L1178.6,241.6" fill="none" stroke="#52a874" stroke-width="2" stroke-linejoin="round" stroke-linecap="round"/><path d="M1152.4,250 L1153.4,247.8 L1181.6,247.8 L1182.6,250" fill="none" stroke="#52a874" stroke-width="2.2" stroke-linejoin="round" stroke-linecap="round"/><ellipse cx="1167.1" cy="234.0" rx="0.74" ry="2.0" fill="#fff" opacity="0.9"/><ellipse cx="1167.1" cy="239.6" rx="1.83" ry="2.0" fill="#fff" opacity="0.9"/><ellipse cx="1167.1" cy="245.2" rx="2.92" ry="2.0" fill="#fff" opacity="0.9"/><ellipse cx="1167.1" cy="251.0" rx="4.05" ry="2.0" fill="#fff" opacity="0.9"/><ellipse cx="1167.1" cy="256.8" rx="5.18" ry="2.0" fill="#fff" opacity="0.9"/><ellipse cx="1167.1" cy="262.6" rx="6.30" ry="2.0" fill="#fff" opacity="0.9"/><ellipse cx="1167.1" cy="268.4" rx="7.43" ry="2.0" fill="#fff" opacity="0.9"/><line x1="1167.1" y1="226" x2="1167.1" y2="272" stroke="#52a874" stroke-width="0.9"/><polyline points="977,379.4 1002.1,362.2 1027.4,379.4" fill="none" stroke="#52a874" stroke-width="4.6" stroke-linecap="round" stroke-linejoin="miter"/><rect x="989.4" y="361.1" width="3.9" height="7" fill="#52a874"/><polygon points="981.9,382.2 1002.1,369.1 1023.9,382.2 1023.9,401.5 981.9,401.5" fill="#52a874"/><polygon points="1006,375.3 996.3,387.9 1001.2,387.9 1000.5,399.4 1007.6,385.4 1003.2,385.4" fill="#fff"/><text x="21.2" y="25.8" font-size="14" font-weight="normal" fill="rgba(255,255,255,0.82)" text-anchor="start" textLength="57.5" lengthAdjust="spacingAndGlyphs" stroke="rgba(255,255,255,0.82)" stroke-width="0.32">YamBMS</text><text x="113.6" y="25.8" font-size="14" font-weight="normal" fill="rgba(255,255,255,0.82)" text-anchor="start" textLength="45.5" lengthAdjust="spacingAndGlyphs" stroke="rgba(255,255,255,0.82)" stroke-width="0.32">Control</text><text x="194.5" y="25.8" font-size="14" font-weight="normal" fill="rgba(255,255,255,0.82)" text-anchor="start" textLength="29.5" lengthAdjust="spacingAndGlyphs" stroke="rgba(255,255,255,0.82)" stroke-width="0.32">BMS</text><text x="259.0" y="25.8" font-size="14" font-weight="normal" fill="#fff" text-anchor="start" textLength="77.7" lengthAdjust="spacingAndGlyphs" stroke="#fff" stroke-width="0.32">EG4 Inverter</text><text x="118.1" y="149.8" font-size="21" font-weight="normal" fill="#212121" text-anchor="middle" textLength="76.0" lengthAdjust="spacingAndGlyphs">325.0 W</text><text x="118.1" y="170.6" font-size="14.5" font-weight="normal" fill="#212121" text-anchor="middle" textLength="106.0" lengthAdjust="spacingAndGlyphs">PPV1(3.6) 0-4kW</text><text x="314.1" y="149.8" font-size="21" font-weight="normal" fill="#212121" text-anchor="middle" textLength="76.0" lengthAdjust="spacingAndGlyphs">559.0 W</text><text x="314.1" y="170.6" font-size="14.5" font-weight="normal" fill="#212121" text-anchor="middle" textLength="106.0" lengthAdjust="spacingAndGlyphs">PPV3(2.8) 0-4kW</text><text x="510.1" y="149.8" font-size="21" font-weight="normal" fill="#212121" text-anchor="middle" textLength="76.0" lengthAdjust="spacingAndGlyphs">289.0 W</text><text x="510.1" y="170.6" font-size="14.5" font-weight="normal" fill="#212121" text-anchor="middle" textLength="147.0" lengthAdjust="spacingAndGlyphs">acCoupleP(1.36) 0-4kW</text><text x="629.0" y="89.5" font-size="16" font-weight="normal" fill="#727272" text-anchor="start" textLength="117.5" lengthAdjust="spacingAndGlyphs" stroke="#727272" stroke-width="0.32">Solar Power Day</text><text x="631.1" y="127.1" font-size="28" font-weight="normal" fill="#212121" text-anchor="start" textLength="69.5" lengthAdjust="spacingAndGlyphs">569.4</text><text x="707.7" y="127.1" font-size="18" font-weight="normal" fill="#727272" text-anchor="start" textLength="22.5" lengthAdjust="spacingAndGlyphs">Wh</text><text x="40.5" y="240.5" font-size="16" font-weight="normal" fill="#727272" text-anchor="start" textLength="101.0" lengthAdjust="spacingAndGlyphs" stroke="#727272" stroke-width="0.32">Solar PV Total</text><text x="41.6" y="278.0" font-size="28" font-weight="normal" fill="#212121" text-anchor="start" textLength="91.0" lengthAdjust="spacingAndGlyphs">1,173.0</text><text x="140.6" y="278.0" font-size="18" font-weight="normal" fill="#727272" text-anchor="start" textLength="14.0" lengthAdjust="spacingAndGlyphs">W</text><text x="40.7" y="433.0" font-size="16" font-weight="normal" fill="#727272" text-anchor="start" textLength="119.5" lengthAdjust="spacingAndGlyphs" stroke="#727272" stroke-width="0.32">Main Panel Load</text><text x="40.9" y="470.0" font-size="28" font-weight="normal" fill="#212121" text-anchor="start" textLength="91.2" lengthAdjust="spacingAndGlyphs">4,143.0</text><text x="140.6" y="470.0" font-size="18" font-weight="normal" fill="#727272" text-anchor="start" textLength="14.0" lengthAdjust="spacingAndGlyphs">W</text><text class="tn" x="79.8" y="616.8">PPV1</text><text class="ts" x="79.8" y="633.9">325.0 W</text><text class="tn" x="275.8" y="616.8">PPV3</text><text class="ts" x="275.8" y="633.9">559.0 W</text><text class="tn" x="471.8" y="616.8">Gen Power</text><text class="ts" x="471.8" y="633.9">286.0 W</text><text class="tn" x="667.8" y="616.8">PLoad</text><text class="ts" x="667.8" y="633.9">4,143.0 W</text><text class="tn" x="79.8" y="680.8">PV1 Voltage</text><text class="ts" x="79.8" y="697.9">277.6 V</text><text class="tn" x="275.8" y="680.8">PV3 Voltage</text><text class="ts" x="275.8" y="697.9">217.4 V</text><text class="tn" x="471.8" y="680.8">ePV1 Day</text><text class="ts" x="471.8" y="697.9">9.2 kWh</text><text class="tn" x="667.8" y="680.8">ePV3 Day</text><text class="ts" x="667.8" y="697.9">10.7 kWh</text><text class="tn" x="79.8" y="744.8">ePS Volts L1N</text><text class="ts" x="79.8" y="761.9">119.7 V</text><text class="tn" x="275.8" y="744.8">ePS Volts L2N</text><text class="ts" x="275.8" y="761.9">119.8 V</text><text class="tn" x="471.8" y="744.8">EPS L1N Power</text><text class="ts" x="471.8" y="761.9">2,097.0 W</text><text class="tn" x="667.8" y="744.8">EPS L2N Power</text><text class="ts" x="667.8" y="761.9">2,047.0 W</text><text class="tn" x="79.8" y="808.8">Gen Power Day</text><text class="ts" x="79.8" y="825.9">6,004.0 W</text><text class="tn" x="275.8" y="808.8">Today&#x27;s Charge</text><text class="ts" x="275.8" y="825.9">17.0 kWh</text><text class="tn" x="471.8" y="808.8">Today&#x27;s DisCharge</text><text class="ts" x="471.8" y="825.9">5.5 kWh</text><text class="tn" x="667.8" y="808.8">PCharge</text><text class="ts" x="667.8" y="825.9">0.0 W</text><text class="tn" x="79.8" y="872.8">PDischarge</text><text class="ts" x="79.8" y="889.9">3,070.0 W</text><text class="tn" x="275.8" y="872.8">eLoad Day</text><text class="ts" x="275.8" y="889.9">11.4 kWh</text><text class="tn" x="471.8" y="872.8">VBatt</text><text class="ts" x="471.8" y="889.9">52.40 V</text><text class="tn" x="667.8" y="872.8">Batt SOC</text><text class="ts" x="667.8" y="889.9">90%</text><text class="tn" x="888.8" y="616.8">eEPS Day</text><text class="ts" x="888.8" y="633.9">11.5 kWh</text><text class="tn" x="1084.8" y="616.8">Batt Parallel Num</text><text class="ts" x="1084.8" y="633.9">0.0</text><text class="tn" x="1280.8" y="616.8">eInv Day</text><text class="ts" x="1280.8" y="633.9">0.0 kWh</text><text class="tn" x="1476.8" y="616.8">EOD</text><text class="ts" x="1476.8" y="633.9">5.0%</text><text class="tn" x="888.8" y="680.8">eRec Day</text><text class="ts" x="888.8" y="697.9">0.0 kWh</text><text class="tn" x="1084.8" y="680.8">eToGrid Day</text><text class="ts" x="1084.8" y="697.9">0.0 kWh</text><text class="tn" x="1280.8" y="680.8">eToUser Day</text><text class="ts" x="1280.8" y="697.9">0.0 kWh</text><text class="tn" x="1476.8" y="680.8" textLength="123" lengthAdjust="spacingAndGlyphs">ForceDischarge E…</text><text class="ts" x="1476.8" y="697.9">6 hour</text><text class="tn" x="888.8" y="744.8" textLength="123" lengthAdjust="spacingAndGlyphs">ForceDischarge E…</text><text class="ts" x="888.8" y="761.9">0 hour</text><text class="tn" x="1084.8" y="744.8" textLength="123" lengthAdjust="spacingAndGlyphs">ForceDischarge E…</text><text class="ts" x="1084.8" y="761.9">0 hour</text><text class="tn" x="1280.8" y="744.8" textLength="123" lengthAdjust="spacingAndGlyphs">ForceDischarge E…</text><text class="ts" x="1280.8" y="761.9">0 min</text><text class="tn" x="1476.8" y="744.8" textLength="123" lengthAdjust="spacingAndGlyphs">ForceDischarge E…</text><text class="ts" x="1476.8" y="761.9">0 min</text><text class="tn" x="888.8" y="808.8" textLength="123" lengthAdjust="spacingAndGlyphs">ForceDischarge E…</text><text class="ts" x="888.8" y="825.9">0 min</text><text class="tn" x="1084.8" y="808.8" textLength="123" lengthAdjust="spacingAndGlyphs">ForceDischarge S…</text><text class="ts" x="1084.8" y="825.9">40.0%</text><text class="tn" x="1280.8" y="808.8" textLength="123" lengthAdjust="spacingAndGlyphs">ForceDischarge S…</text><text class="ts" x="1280.8" y="825.9">1 hour</text><text class="tn" x="1476.8" y="808.8" textLength="123" lengthAdjust="spacingAndGlyphs">ForceDischarge S…</text><text class="ts" x="1476.8" y="825.9">0 hour</text><text class="tn" x="888.8" y="872.8" textLength="123" lengthAdjust="spacingAndGlyphs">ForceDischarge S…</text><text class="ts" x="888.8" y="889.9">0 hour</text><text class="tn" x="1084.8" y="872.8" textLength="123" lengthAdjust="spacingAndGlyphs">ForceDischarge S…</text><text class="ts" x="1084.8" y="889.9">0 min</text><text class="tn" x="1280.8" y="872.8" textLength="123" lengthAdjust="spacingAndGlyphs">ForceDischarge S…</text><text class="ts" x="1280.8" y="889.9">0 min</text><text class="tn" x="1476.8" y="872.8" textLength="123" lengthAdjust="spacingAndGlyphs">ForceDischarge S…</text><text class="ts" x="1476.8" y="889.9">0 min</text><text x="1033.4" y="107.0" font-size="14" font-weight="bold" fill="#212121" text-anchor="start" textLength="47.5" lengthAdjust="spacingAndGlyphs">1173 W</text><text x="1033.4" y="122.6" font-size="12.5" font-weight="normal" fill="#727272" text-anchor="start" textLength="16.0" lengthAdjust="spacingAndGlyphs">PV</text><text x="1033.4" y="135.5" font-size="12.5" font-weight="normal" fill="#727272" text-anchor="start" textLength="37.0" lengthAdjust="spacingAndGlyphs">Power</text><text x="857.8" y="171.8" font-size="14" font-weight="bold" fill="#212121" text-anchor="start" textLength="47.5" lengthAdjust="spacingAndGlyphs">3108 W</text><text x="857.8" y="187.8" font-size="12.5" font-weight="normal" fill="#727272" text-anchor="start" textLength="59.0" lengthAdjust="spacingAndGlyphs">Discharge</text><text x="857.8" y="200.6" font-size="12.5" font-weight="normal" fill="#727272" text-anchor="start" textLength="37.9" lengthAdjust="spacingAndGlyphs">Power</text><text x="857.7" y="301.7" font-size="14" font-weight="bold" fill="#212121" text-anchor="start" textLength="36.2" lengthAdjust="spacingAndGlyphs">52.86</text><text x="857.7" y="315.9" font-size="14" font-weight="bold" fill="#212121" text-anchor="start" textLength="24.5" lengthAdjust="spacingAndGlyphs">Vdc</text><text x="857.7" y="332.9" font-size="14" font-weight="bold" fill="#212121" text-anchor="start" textLength="26.4" lengthAdjust="spacingAndGlyphs">94%</text><text x="1143.6" y="301.2" font-size="14" font-weight="bold" fill="#212121" text-anchor="start" textLength="22.7" lengthAdjust="spacingAndGlyphs">0 W</text><text x="1143.6" y="318.4" font-size="14" font-weight="bold" fill="#212121" text-anchor="start" textLength="36.0" lengthAdjust="spacingAndGlyphs">245.0</text><text x="1143.6" y="331.6" font-size="14" font-weight="bold" fill="#212121" text-anchor="start" textLength="23.2" lengthAdjust="spacingAndGlyphs">Vac</text><text x="923.3" y="366.6" font-size="14" font-weight="bold" fill="#212121" text-anchor="start" textLength="47.5" lengthAdjust="spacingAndGlyphs">4143 W</text><text x="923.3" y="382.9" font-size="12.5" font-weight="normal" fill="#727272" text-anchor="start" textLength="35.4" lengthAdjust="spacingAndGlyphs">Home</text><text x="923.3" y="396.7" font-size="12.5" font-weight="normal" fill="#727272" text-anchor="start" textLength="36.8" lengthAdjust="spacingAndGlyphs">Usage</text></svg>
<svg style="position:absolute;left:0;top:0;width:16px;height:20px" viewBox="0 0 16 20"><path d="M-6,-9.5 L10.4,9.6 L7.5,12.1 L7.4,17 L6,17.4 L3,14.3 L-3,14.3 Z" fill="#4a4a4a" stroke="#fff" stroke-width="1.1" stroke-linejoin="round"/></svg>
<div style="position:absolute;left:0;top:903px;width:1523px;height:4px;background:linear-gradient(rgba(0,0,0,0),rgba(0,0,0,0.09))"></div>
</body></html>
